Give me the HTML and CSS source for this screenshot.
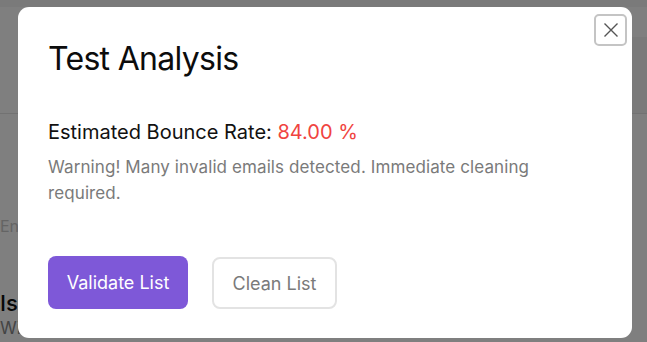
FILE: index.html
```html
<!DOCTYPE html>
<html>
<head>
<meta charset="utf-8">
<link rel="stylesheet" href="styles.css">
</head>
<body>
<div class="page">
  <div class="topbar"></div>
  <div class="header-band"><div class="side-card"></div></div>
  <div class="rule"></div>
  <div class="section">
    <p class="hint">Enter a list</p>
    <h3 class="subhead">Is being</h3>
    <p class="small">Will take a few minutes</p>
  </div>
</div>
<div class="overlay"></div>
<div class="modal-wrap">
  <div class="modal">
    <button class="close" aria-label="Close">
      <svg width="18" height="18" viewBox="0 0 18 18"><path d="M2.5 2.5 L15.5 15.5 M15.5 2.5 L2.5 15.5" stroke="#555" stroke-width="1.4" fill="none"/></svg>
    </button>
    <h2 class="title">Test Analysis</h2>
    <p class="rate">Estimated Bounce Rate: <span class="pct">84.00 %</span></p>
    <p class="warn">Warning! Many invalid emails detected. Immediate cleaning required.</p>
    <div class="actions">
      <button class="btn primary">Validate List</button>
      <button class="btn outline">Clean List</button>
    </div>
  </div>
</div>
</body>
</html>
```
FILE: styles.css
```css
* { box-sizing: border-box; }
html, body { margin: 0; padding: 0; }
body {
  width: 647px;
  height: 342px;
  overflow: hidden;
  font-family: Inter, "Noto Sans", sans-serif;
  background: #fff;
  position: relative;
}
.page { height: 342px; }
.topbar { height: 7px; background: #f4f4f4; }
.header-band { height: 106px; display: flex; justify-content: flex-end; padding-top: 30px; }
.side-card { width: 20px; height: 76px; background: #f4f4f4; }
.rule { height: 1px; background: #e4e4e4; }
.section { padding-left: 0; }
.hint { margin: 102px 0 0; font-size: 16px; color: #c8c8c8; line-height: 20px; white-space: nowrap; }
.subhead { margin: 54px 0 0; font-size: 22px; font-weight: 500; color: #111; line-height: 26px; white-space: nowrap; }
.small { margin: 2px 0 0; font-size: 17px; color: #888; line-height: 20px; white-space: nowrap; }
.overlay {
  position: absolute; inset: 0;
  background: rgba(0,0,0,0.5);
}
.modal-wrap {
  position: absolute; inset: 0;
  padding: 7px 15px 4px 18px;
}
.modal {
  position: relative;
  width: 614px;
  height: 331px;
  background: #fff;
  border-radius: 11px;
  padding: 32px 30px 0 30px;
}
.close {
  position: absolute;
  top: 7px; right: 5px;
  width: 33px; height: 32px;
  border: 2px solid #c4c4c4;
  border-radius: 5px;
  background: #fff;
  padding: 0;
  display: flex; align-items: center; justify-content: center;
}
.title {
  margin: 0;
  font-size: 32px;
  font-weight: 400;
  letter-spacing: -0.7px;
  line-height: 40px;
  color: #0c0c0c;
}
.rate {
  margin: 41px 0 0;
  font-size: 20px;
  line-height: 24px;
  letter-spacing: 0;
  color: #111;
}
.pct { color: #f0443f; }
.warn {
  margin: 10px 0 0;
  font-size: 17px;
  line-height: 26px;
  letter-spacing: 0.1px;
  color: #7a7a7a;
  width: 520px;
}
.actions { display: flex; gap: 24px; margin-top: 50px; }
.btn {
  height: 53px;
  border-radius: 8px;
  font-family: Inter, "Noto Sans", sans-serif;
  font-size: 18px;
  letter-spacing: 0;
  padding: 0;
}
.primary { background: #7e58d8; color: #fff; border: none; width: 140px; }
.outline { background: #fff; color: #7a7a7a; border: 2px solid #e3e3e3; width: 125px; height: 52px; margin-top: 1px; }
```
